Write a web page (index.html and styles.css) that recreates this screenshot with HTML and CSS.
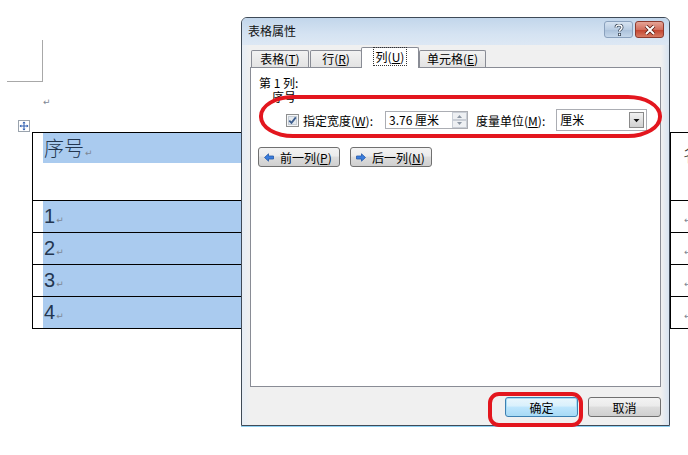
FILE: index.html
```html
<!DOCTYPE html>
<html lang="zh-CN">
<head>
<meta charset="utf-8">
<title>表格属性</title>
<link rel="stylesheet" href="styles.css">
</head>
<body>
<div class="doc">
  <div class="corner"></div>
  <div class="para"><span class="ret">↵</span></div>
  <div class="handle">
    <svg width="12" height="12" viewBox="0 0 12 12"><rect x="0.5" y="0.5" width="11" height="11" fill="#fff" stroke="#9aa3ad"/><path d="M6 2v8M2 6h8" stroke="#2f5fb0" stroke-width="1"/><path d="M6 1.5l-1.6 1.8h3.2zM6 10.5l-1.6-1.8h3.2zM1.5 6l1.8-1.6v3.2zM10.5 6l-1.8-1.6v3.2z" fill="#2f5fb0"/></svg>
  </div>
  <table class="tbl">
    <tr class="hdr">
      <td class="c1"><div class="sel sel-hdr"><span class="cjk">序号</span><span class="ret">↵</span></div></td>
      <td class="c2"></td>
      <td class="c3"><span class="cjk dim">名称</span></td>
    </tr>
    <tr><td class="c1"><div class="sel">1<span class="ret">↵</span></div></td><td class="c2"></td><td class="c3"><span class="ret">↵</span></td></tr>
    <tr><td class="c1"><div class="sel">2<span class="ret">↵</span></div></td><td class="c2"></td><td class="c3"><span class="ret">↵</span></td></tr>
    <tr><td class="c1"><div class="sel">3<span class="ret">↵</span></div></td><td class="c2"></td><td class="c3"><span class="ret">↵</span></td></tr>
    <tr><td class="c1"><div class="sel">4<span class="ret">↵</span></div></td><td class="c2"></td><td class="c3"><span class="ret">↵</span></td></tr>
  </table>
</div>

<div class="dialog">
  <div class="titlebar">
    <span class="title">表格属性</span>
    <div class="tbtns">
      <div class="tb help">
        <svg width="10" height="12" viewBox="0 0 10 12"><path d="M2 3.5C2 1.5 3.5 1 5 1s3 .7 3 2.5c0 1.8-2.5 2-2.5 4" fill="none" stroke="#3b4a5c" stroke-width="3"/><path d="M2 3.5C2 1.5 3.5 1 5 1s3 .7 3 2.5c0 1.8-2.5 2-2.5 4" fill="none" stroke="#fff" stroke-width="1.4"/><rect x="4" y="9" width="3" height="3" fill="#3b4a5c"/><rect x="4.8" y="9.7" width="1.4" height="1.6" fill="#fff"/></svg>
      </div>
      <div class="tb close">
        <svg width="12" height="10" viewBox="0 0 12 10"><path d="M2 1l8 8M10 1l-8 8" stroke="#5a1d14" stroke-width="3.6"/><path d="M2 1l8 8M10 1l-8 8" stroke="#fff" stroke-width="2"/></svg>
      </div>
    </div>
  </div>
  <div class="client">
    <div class="tabs">
      <div class="tab t1">表格(<u>T</u>)</div>
      <div class="tab t2">行(<u>R</u>)</div>
      <div class="tab t3 active"><span class="focus">列(<u>U</u>)</span></div>
      <div class="tab t4">单元格(<u>E</u>)</div>
    </div>
    <div class="panel">
      <div class="line">第 1 列:</div>
      <div class="line indent">序号</div>
      <div class="widthrow">
        <span class="check">
          <svg width="13" height="13" viewBox="0 0 13 13"><rect x="0.5" y="0.5" width="12" height="12" fill="#f4f6f8" stroke="#8e8f8f"/><rect x="2.5" y="2.5" width="8" height="8" fill="#e4e9ee" stroke="#c5ccd4"/><path d="M3.3 6.6l2.2 2.3 4.3-5.5" fill="none" stroke="#3c5d8e" stroke-width="1.8"/></svg>
        </span>
        <span class="lbl">指定宽度(<u>W</u>):</span>
        <span class="input"><span class="val">3.76 厘米</span>
          <span class="spin">
            <svg width="15" height="16" viewBox="0 0 15 16"><rect x="0.5" y="0.5" width="14" height="7" fill="#eef0f3" stroke="#c9ced6"/><rect x="0.5" y="8.5" width="14" height="7" fill="#eef0f3" stroke="#c9ced6"/><path d="M5 6l2.5-3 2.5 3z" fill="#8d97a4"/><path d="M5 10l2.5 3 2.5-3z" fill="#8d97a4"/></svg>
          </span>
        </span>
        <span class="lbl unit">度量单位(<u>M</u>):</span>
        <span class="select"><span class="val">厘米</span>
          <span class="drop"><svg width="15" height="16" viewBox="0 0 15 16"><defs><linearGradient id="g1" x1="0" y1="0" x2="0" y2="1"><stop offset="0" stop-color="#f3f3f3"/><stop offset="1" stop-color="#cfcfcf"/></linearGradient></defs><rect x="0.5" y="0.5" width="14" height="15" fill="url(#g1)" stroke="#8a8a8a"/><path d="M4.5 7h6l-3 3.2z" fill="#111"/></svg></span>
        </span>
      </div>
      <div class="navrow">
        <button class="btn nav"><svg width="10" height="9" viewBox="0 0 10 9"><path d="M0.5 4.5L4.5 0.8V3H9.5V6H4.5V8.2z" fill="#3b7ddd" stroke="#2459a8" stroke-width="0.8"/></svg><span>前一列(<u>P</u>)</span></button>
        <button class="btn nav"><svg width="10" height="9" viewBox="0 0 10 9"><path d="M9.5 4.5L5.5 0.8V3H0.5V6H5.5V8.2z" fill="#3b7ddd" stroke="#2459a8" stroke-width="0.8"/></svg><span>后一列(<u>N</u>)</span></button>
      </div>
    </div>
    <div class="footer">
      <button class="btn action default">确定</button>
      <button class="btn action">取消</button>
    </div>
  </div>
</div>

<div class="mark mark-width"></div>
<div class="mark mark-ok"></div>
</body>
</html>
```
FILE: styles.css
```css
html, body {
  margin: 0;
  padding: 0;
  overflow: hidden;
  background: #fff;
}
body {
  width: 688px;
  height: 455px;
  position: relative;
  font-family: "Noto Sans CJK SC", "Liberation Sans", sans-serif;
  font-size: 12px;
  color: #000;
}
.doc {
  padding-top: 40px;
}
.corner {
  box-sizing: border-box;
  width: 36px;
  height: 42px;
  margin-left: 7px;
  border-right: 1px solid #a8a8a8;
  border-bottom: 1px solid #a8a8a8;
}
.para {
  margin-top: 10px;
  height: 16px;
  padding-left: 42px;
  line-height: 16px;
}
.ret {
  font-family: "DejaVu Sans", sans-serif;
  font-size: 9px;
  color: #7d8794;
  margin-left: 1px;
}
.handle {
  margin-top: 12px;
  margin-left: 18px;
  width: 12px;
  height: 12px;
}
.handle svg { display: block; }
.tbl {
  border-collapse: separate;
  border-spacing: 0;
  table-layout: fixed;
  width: 839px;
  margin-left: 32px;
  border-top: 1px solid #000;
  border-left: 1px solid #000;
}
.tbl td {
  box-sizing: border-box;
  padding: 0;
  border-right: 1px solid #000;
  border-bottom: 1px solid #000;
  height: 32px;
  vertical-align: top;
}
.tbl .hdr td { height: 68px; }
.tbl .c1 { width: 209px; padding-left: 10px; }
.tbl .c2 { width: 429px; }
.tbl .c3 { width: 201px; padding-left: 12px; padding-top: 8px; }
.tbl .hdr .c3 { padding-top: 6px; }
.sel {
  background: #aacbef;
  height: 31px;
  line-height: 31px;
  font-family: "Liberation Sans", sans-serif;
  font-size: 20px;
  color: #23364f;
  padding-left: 1px;
}
.sel-hdr {
  height: 30px;
  line-height: 30px;
}
.cjk {
  font-family: "Noto Sans CJK SC", sans-serif;
  font-size: 20px;
  font-weight: 300;
  color: #23364f;
}
.dim { color: #3a3a3a; }

/* dialog */
.dialog {
  position: absolute;
  left: 241px;
  top: 17px;
  box-sizing: border-box;
  width: 429px;
  height: 409px;
  border: 1px solid #3f4a57;
  border-radius: 6px 6px 0 0;
  background: linear-gradient(90deg, #e6edf5 0, #f0f0f0 8px, #f0f0f0 calc(100% - 8px), #d7e3f0 100%);
  box-shadow: 0 1px 0 #8fd0f2;
}
.titlebar {
  height: 27px;
  display: flex;
  align-items: flex-start;
  padding-left: 6px;
  border-radius: 5px 5px 0 0;
  background: linear-gradient(#c2d6eb, #d5e3f2 60%, #dde8f4);
}
.title {
  margin-top: 6px;
  line-height: 14px;
  color: #111;
}
.tbtns {
  margin-left: auto;
  margin-right: 5px;
  margin-top: 3px;
  display: flex;
  gap: 2px;
}
.tb {
  box-sizing: border-box;
  width: 29px;
  height: 17px;
  border-radius: 3px;
  display: flex;
  align-items: center;
  justify-content: center;
}
.help {
  border: 1px solid #8aa1bd;
  background: linear-gradient(#d6e3f1, #b9cde3 50%, #a9c0da 51%, #c5d7ea);
}
.close {
  border: 1px solid #8d3a2e;
  background: linear-gradient(#e6a496, #d3705f 50%, #c2412c 51%, #d77a62);
}
.client {
  margin: 0 8px;
}
.tabs {
  margin-top: 2px;
  height: 20px;
  display: flex;
  align-items: flex-end;
  padding-left: 1px;
  position: relative;
  z-index: 1;
}
.tab {
  box-sizing: border-box;
  height: 17px;
  line-height: 15px;
  text-align: center;
  border: 1px solid #898c95;
  border-bottom: none;
  background: linear-gradient(#f2f2f2, #e3e3e3);
  border-radius: 2px 2px 0 0;
}
.tab + .tab { margin-left: 1px; }
.t1 { width: 58px; }
.t2 { width: 52px; }
.t3 { width: 58px; }
.t4 { width: 67px; }
.tab.active {
  height: 21px;
  margin-bottom: -1px;
  margin-left: -1px;
  margin-right: -1px;
  padding-top: 1px;
  background: #fff;
}
.focus {
  outline: 1px dotted #333;
  outline-offset: 0;
  padding: 0 2px;
}
u { text-decoration: underline; }
.panel {
  box-sizing: border-box;
  height: 320px;
  border: 1px solid #898c95;
  background: #fff;
  padding: 8px 0 0 8px;
}
.line {
  height: 14px;
  line-height: 14px;
}
.indent { padding-left: 13px; }
.widthrow {
  margin-top: 5px;
  height: 22px;
  display: flex;
  align-items: center;
  padding-left: 27px;
}
.check { width: 13px; height: 13px; }
.check svg { display: block; }
.lbl { margin-left: 4px; white-space: nowrap; }
.input {
  box-sizing: border-box;
  margin-left: 12px;
  width: 83px;
  height: 18px;
  border: 1px solid #abadb3;
  display: flex;
  align-items: center;
  padding-left: 3px;
}
.val { flex: 1; line-height: 14px; }
.spin { width: 15px; height: 16px; }
.spin svg, .drop svg { display: block; }
.unit { margin-left: 8px; }
.select {
  box-sizing: border-box;
  margin-left: 11px;
  width: 91px;
  height: 22px;
  border: 1px solid #abadb3;
  display: flex;
  align-items: center;
  padding-left: 3px;
  padding-right: 2px;
}
.drop { width: 15px; height: 16px; }
.navrow {
  margin-top: 16px;
  margin-left: -1px;
  display: flex;
  gap: 10px;
}
.btn {
  box-sizing: border-box;
  height: 20px;
  padding: 0;
  border: 1px solid #707070;
  border-radius: 3px;
  background: linear-gradient(#f3f3f3, #ebebeb 45%, #dddddd 50%, #cfcfcf);
  font-family: "Noto Sans CJK SC", "Liberation Sans", sans-serif;
  font-size: 12px;
  color: #000;
  display: flex;
  align-items: center;
  justify-content: center;
}
.nav {
  width: 82px;
  justify-content: flex-start;
  padding-left: 5px;
  gap: 6px;
}
.nav svg { display: block; }
.footer {
  height: 38px;
  display: flex;
  justify-content: flex-end;
  align-items: flex-start;
  gap: 10px;
  padding-top: 10px;
  box-sizing: border-box;
}
.action { width: 73px; }
.default {
  border-color: #3c7fb1;
  box-shadow: inset 0 0 0 1px #a9dcf5;
  background: linear-gradient(#eaf6fd, #d9f0fc 45%, #bee6fd 50%, #a7d9f5);
}
.mark {
  position: absolute;
  border: 4px solid #e3161e;
  box-sizing: border-box;
}
.mark-width {
  left: 259px;
  top: 95px;
  width: 403px;
  height: 43px;
  border-radius: 34px / 21px;
}
.mark-ok {
  left: 488px;
  top: 392px;
  width: 95px;
  height: 35px;
  border-radius: 11px;
}
```
